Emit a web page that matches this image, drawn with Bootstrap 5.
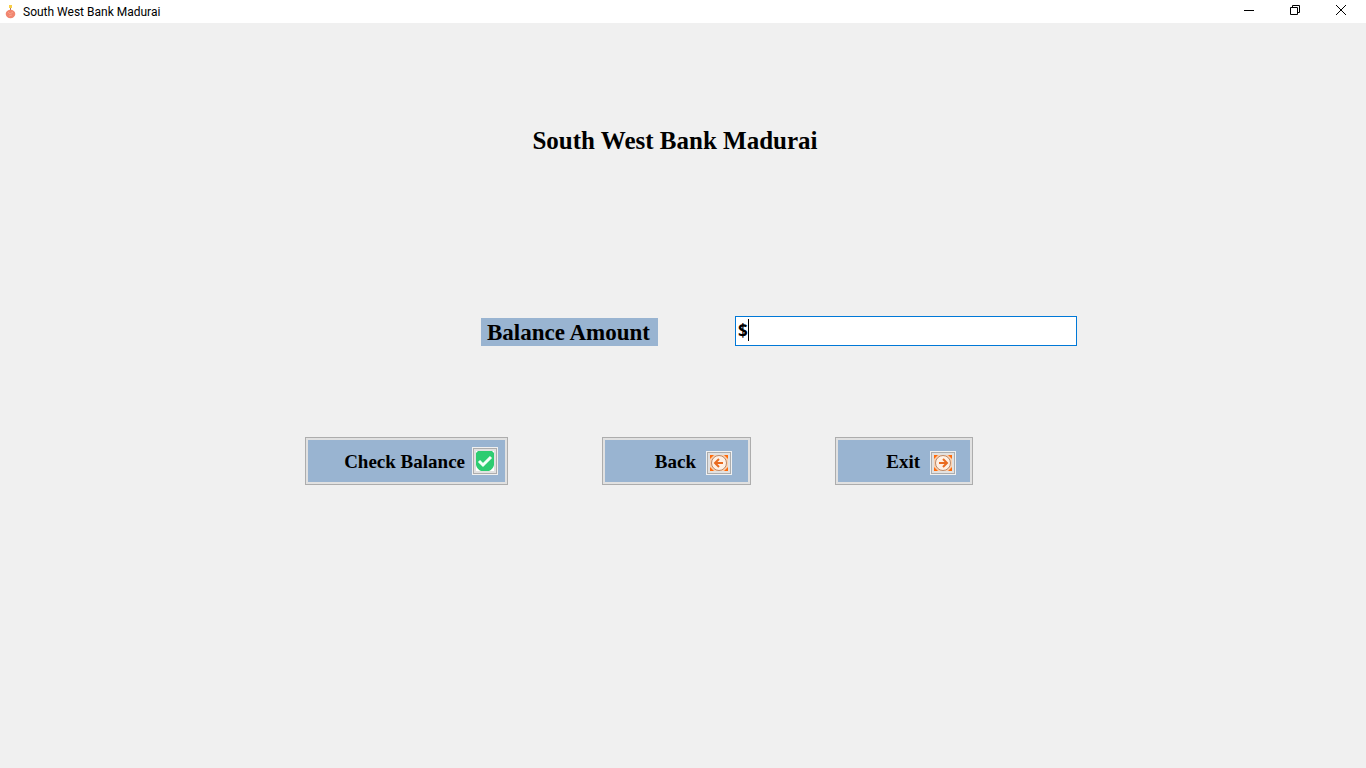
<!DOCTYPE html>
<html lang="en">
<head>
<meta charset="utf-8">
<meta name="viewport" content="width=device-width, initial-scale=1">
<title>South West Bank Madurai</title>
<link href="https://cdn.jsdelivr.net/npm/bootstrap@5.3.0/dist/css/bootstrap.min.css" rel="stylesheet">
<style>
  :root { --steel: #99b4d1; --face: #f0f0f0; --edge: #adadad; }
  body { background: var(--face); color: #000; font-family: "Liberation Serif", serif; }
  .titlebar { height: 23px; font: 12px/16px Roboto, sans-serif; }
  .caption-bar { padding-right: 2px; }
  .caption-btn { width: 46px; height: 20px; background: none; }
  .bank-name { font-size: 25px; line-height: 32px; }
  .heading-row, .balance-row, .action-row { display: grid; align-items: end; }
  .heading-row { grid-template-columns: 531fr auto 547fr; margin-top: 102px; }
  .balance-row { grid-template-columns: 481fr 177px 77fr 342px 289fr; margin-top: 159px; }
  .action-row { grid-template-columns: 305fr 203px 94fr 149px 84fr 138px 393fr; margin-top: 91px; }
  .balance-label { grid-column: 2; height: 28px; padding: 0 6px; background: var(--steel); font-size: 23px; line-height: 30px; }
  .balance-field { grid-column: 4; }
  .balance-input { height: 30px; padding: 0 2px 2px; border: 1px solid #0078d7; outline: 0; caret-color: transparent; font: bold 17px/26px "Open Sans", sans-serif; }
  .text-caret { left: 13px; top: 3px; width: 1px; height: 22px; background: #000; pointer-events: none; }
  .action-btn { height: 48px; padding: 0 9px 0 0; border: 1px solid var(--edge); background: var(--steel); box-shadow: inset 0 0 0 2px #e1e1e1; font-size: 19px; line-height: 24px; }
  .action-btn:nth-child(1) { grid-column: 2; }
  .action-btn:nth-child(2) { grid-column: 4; padding-right: 18px; }
  .action-btn:nth-child(3) { grid-column: 6; padding-right: 16px; }
  .caption-text { padding-top: 2px; }
  .glyph { border: 1px solid var(--face); line-height: 0; margin-left: 7px; }
  .glyph svg { border: 1px solid var(--edge); background: #e1e1e1; padding: 2px; }
  .arrow-glyph { margin: 4px 0 0 10px; }
</style>
</head>
<body>
<header class="titlebar bg-white d-flex align-items-center">
  <svg class="mx-1" width="15" height="18" viewBox="0 0 15 18" aria-hidden="true">
    <path d="M5 2h3v3H5z" fill="#f9cf45"/>
    <path d="M6 5h1v3H6z" fill="#ad7866"/>
    <ellipse cx="6.500" cy="11" rx="4.800" ry="4.200" fill="#f18670"/>
    <path d="M4 9l2 2 3-2M5 13l3-1" fill="none" stroke="#f8a18b"/>
  </svg>
  <span>South West Bank Madurai</span>
  <div class="caption-bar ms-auto d-flex align-self-start">
    <button type="button" class="caption-btn border-0 p-0 d-flex align-items-center justify-content-center" aria-label="Minimize"><svg width="12" height="12"><path d="M1 6.500h10" stroke="#000"/></svg></button>
    <button type="button" class="caption-btn border-0 p-0 d-flex align-items-center justify-content-center" aria-label="Restore"><svg width="12" height="12" fill="none" stroke="#000"><path d="M1.500 3.500h7v7h-7zM3.500 3.500v-2h7v7h-2"/></svg></button>
    <button type="button" class="caption-btn border-0 p-0 d-flex align-items-center justify-content-center" aria-label="Close"><svg width="12" height="12"><path d="M1 1l10 10M11 1L1 11" stroke="#000"/></svg></button>
  </div>
</header>
<main>
  <div class="heading-row"><span></span><h1 class="bank-name fw-bold mb-0 text-nowrap">South West Bank Madurai</h1></div>
  <form>
    <div class="balance-row">
      <label class="balance-label fw-bold text-nowrap" for="balance">Balance Amount</label>
      <div class="balance-field position-relative">
        <input class="balance-input d-block w-100" id="balance" type="text" value="$">
        <span class="text-caret position-absolute"></span>
      </div>
    </div>
    <div class="action-row">
      <button type="button" class="action-btn fw-bold d-flex align-items-center justify-content-end text-nowrap"><span class="caption-text">Check Balance</span>
        <span class="glyph"><svg width="24" height="26" viewBox="0 0 18 20" aria-hidden="true"><path d="M0 0h18v20H0z" fill="#fff"/><path d="M2 0h14l2 2v12q-1 4-5 6H5q-4-2-5-6V2z" fill="#2ecc71"/><path d="M3 10l4 4 8-8" fill="none" stroke="#f3fff7" stroke-width="3"/></svg></span>
      </button>
      <button type="button" class="action-btn fw-bold d-flex align-items-center justify-content-end text-nowrap"><span class="caption-text">Back</span>
        <span class="glyph arrow-glyph"><svg width="24" height="22" viewBox="0 0 18 16" aria-hidden="true"><path d="M0 0h18v16H0z" fill="#fbd0ae"/><path d="M0 0h4L0 4zM18 0h-4l4 4zM0 16h4l-4-4zM18 16h-4l4-4z" fill="#ff6b0a"/><circle cx="9" cy="8" r="7.500" fill="#fff0e4" stroke="#b98869"/><path d="M13 8H5M9 4L5 8l4 4" fill="none" stroke="#e96b20" stroke-width="2"/></svg></span>
      </button>
      <button type="button" class="action-btn fw-bold d-flex align-items-center justify-content-end text-nowrap"><span class="caption-text">Exit</span>
        <span class="glyph arrow-glyph"><svg width="24" height="22" viewBox="0 0 18 16" aria-hidden="true"><path d="M0 0h18v16H0z" fill="#fbd0ae"/><path d="M0 0h4L0 4zM18 0h-4l4 4zM0 16h4l-4-4zM18 16h-4l4-4z" fill="#ff6b0a"/><circle cx="9" cy="8" r="7.500" fill="#fff0e4" stroke="#b98869"/><path d="M5 8h8M9 4l4 4-4 4" fill="none" stroke="#e96b20" stroke-width="2"/></svg></span>
      </button>
    </div>
  </form>
</main>
<script src="https://cdn.jsdelivr.net/npm/bootstrap@5.3.0/dist/js/bootstrap.bundle.min.js"></script>
</body>
</html>
